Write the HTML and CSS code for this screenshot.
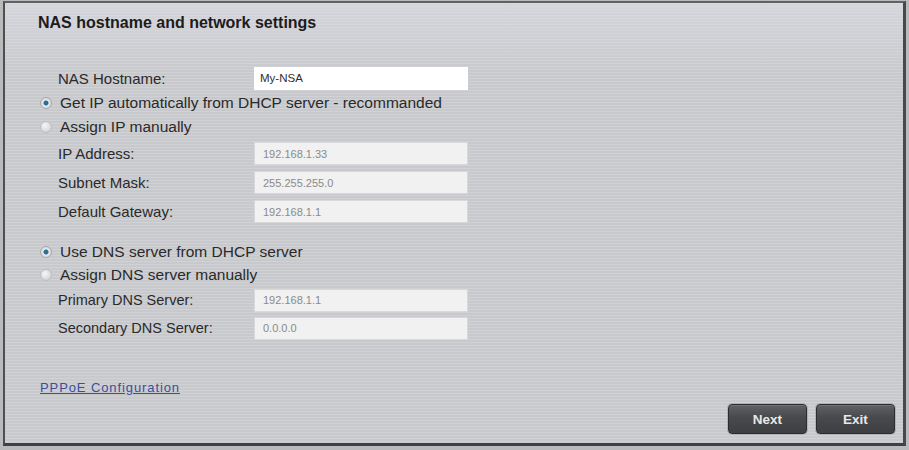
FILE: index.html
```html
<!DOCTYPE html>
<html>
<head>
    <title>NAS hostname and network settings</title>
    <link rel="stylesheet" href="styles.css">
</head>
<body>
    <div class="wizard">
        <h2 class="title">NAS hostname and network settings</h2>

        <div class="form">
            <div class="row first">
                <label>NAS Hostname:</label>
                <input type="text" class="field host" value="My-NSA">
            </div>

            <div class="radio-row">
                <span class="radio on"></span> Get IP automatically from DHCP server - recommanded
            </div>
            <div class="radio-row">
                <span class="radio"></span> Assign IP manually
            </div>
            <div class="row">
                <label>IP Address:</label>
                <input type="text" class="field" value="192.168.1.33" disabled>
            </div>
            <div class="row">
                <label>Subnet Mask:</label>
                <input type="text" class="field" value="255.255.255.0" disabled>
            </div>
            <div class="row">
                <label>Default Gateway:</label>
                <input type="text" class="field" value="192.168.1.1" disabled>
            </div>

            <div class="radio-row dns">
                <span class="radio on"></span> Use DNS server from DHCP server
            </div>
            <div class="radio-row tight">
                <span class="radio"></span> Assign DNS server manually
            </div>
            <div class="row small">
                <label>Primary DNS Server:</label>
                <input type="text" class="field" value="192.168.1.1" disabled>
            </div>
            <div class="row small">
                <label>Secondary DNS Server:</label>
                <input type="text" class="field" value="0.0.0.0" disabled>
            </div>
        </div>

        <div class="footer">
            <a href="#" class="link">PPPoE Configuration</a>
            <div class="buttons">
                <button class="btn">Next</button>
                <button class="btn">Exit</button>
            </div>
        </div>
    </div>
</body>
</html>
```

FILE: styles.css
```css
html, body {
    margin: 0;
    padding: 0;
    background: #b9babc;
}
.wizard {
    box-sizing: border-box;
    width: 903px;
    height: 445px;
    margin: 1px 0 0 3px;
    border: 2px solid #606163;
    border-left-color: #4e4f51;
    border-right: 3px solid #47484a;
    border-bottom: 3px solid #3f4042;
    background-color: #c8c9cc;
    background-image:
        linear-gradient(180deg, rgba(222,224,232,0.55) 0, rgba(222,224,232,0.25) 40px, rgba(222,224,232,0) 70px),
        repeating-linear-gradient(180deg, rgba(255,255,255,0.16) 0, rgba(255,255,255,0.16) 1px, transparent 1px, transparent 3px);
    font-family: "Liberation Sans", Arial, sans-serif;
    color: #222;
    display: flex;
    flex-direction: column;
}
.title {
    margin: 0;
    padding: 11px 0 0 33px;
    font-size: 16px;
    font-weight: bold;
    color: #1c1c1c;
    height: 50px;
    box-sizing: border-box;
}
.form {
    padding: 12px 0 0 35px;
}
.row {
    display: flex;
    align-items: center;
    height: 29px;
}
.row.first {
    height: 26px;
}
.row label {
    width: 196px;
    padding-left: 18px;
    font-size: 15px;
    color: #2a2a2a;
}
.row.small {
    height: 28px;
}
.row.small label {
    font-size: 14.5px;
}
.field {
    box-sizing: border-box;
    width: 214px;
    height: 23px;
    border: 1px solid #d8d8d8;
    background: #f1f1f1;
    padding: 0 8px;
    font-family: "Liberation Sans", Arial, sans-serif;
    font-size: 11px;
    color: #8a8a8a;
    outline: none;
}
.field.host {
    background: #fff;
    border-color: #fff;
    padding: 0 5px;
    font-size: 11.5px;
    color: #2e2e2e;
}
.radio-row {
    display: flex;
    align-items: center;
    height: 24px;
    font-size: 15.5px;
    color: #2a2a2a;
}
.radio-row.dns {
    margin-top: 14px;
}
.radio-row.tight {
    height: 22px;
}
.radio {
    box-sizing: border-box;
    width: 12px;
    height: 12px;
    border-radius: 50%;
    margin: 0 8px 0 0;
    background: radial-gradient(circle at 40% 35%, #f6f6f6, #c9cacc);
    border: 1px solid #bdbec0;
}
.radio.on {
    background: radial-gradient(circle, #2c6c98 0, #2c6c98 2px, #eaebec 3px, #c0c1c3 100%);
    border-color: #a9aaac;
}
.footer {
    flex: 1;
    display: flex;
    justify-content: space-between;
    align-items: flex-end;
    padding: 0 8px 9px 35px;
}
.link {
    font-size: 13px;
    letter-spacing: 0.9px;
    color: #3a4e9e;
    margin-bottom: 39px;
}
.buttons {
    display: flex;
    gap: 9px;
}
.btn {
    width: 79px;
    height: 30px;
    border: 1px solid #2c2d2f;
    border-radius: 4px;
    background: linear-gradient(180deg, #606164, #48494c 45%, #3e3f42);
    box-shadow: 0 0 0 1px rgba(150,151,153,0.5), inset 0 1px 0 rgba(255,255,255,0.12);
    color: #e8e8e8;
    font-family: "Liberation Sans", Arial, sans-serif;
    font-weight: bold;
    font-size: 13.5px;
    cursor: pointer;
}
```
